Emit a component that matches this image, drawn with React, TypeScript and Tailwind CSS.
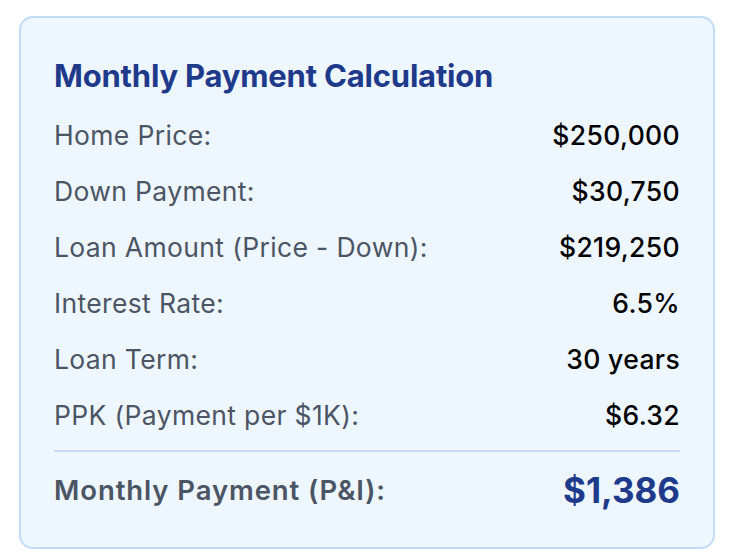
import React from 'react'

const rows = [
  { label: 'Home Price:', value: '$250,000' },
  { label: 'Down Payment:', value: '$30,750' },
  { label: 'Loan Amount (Price - Down):', value: '$219,250' },
  { label: 'Interest Rate:', value: '6.5%' },
  { label: 'Loan Term:', value: '30 years' },
  { label: 'PPK (Payment per $1K):', value: '$6.32' },
]

export default function App() {
  return (
    <div className="min-h-[557px] bg-white pt-[16px] pl-[19px]" style={{ fontFamily: 'Inter, "Noto Sans", sans-serif' }}>
      <div className="w-[696px] h-[533px] rounded-[14px] border-2 border-[#c3dbf7] bg-[#eef6ff] px-[33px] pt-[39px]">
        <h2 className="text-[31px] leading-[38px] font-bold tracking-[-0.2px] text-[#1e3a8a]">
          Monthly Payment Calculation
        </h2>
        <div className="mt-[22px] flex flex-col gap-[20px]">
          {rows.map((r) => (
            <div key={r.label} className="flex items-center justify-between text-[26.5px] leading-[36px] tracking-[0.35px]">
              <span className="text-[#4b5563]">{r.label}</span>
              <span className="font-medium text-black">{r.value}</span>
            </div>
          ))}
        </div>
        <div className="mt-[17px] border-t-2 border-[#c3dbf7]" />
        <div className="mt-[16px] flex items-center justify-between">
          <span className="text-[27.5px] leading-[40px] font-semibold tracking-[0.9px] text-[#4b5563]">Monthly Payment (P&amp;I):</span>
          <span className="text-[35px] leading-[44px] font-bold text-[#1e3a8a]">$1,386</span>
        </div>
      </div>
    </div>
  )
}
